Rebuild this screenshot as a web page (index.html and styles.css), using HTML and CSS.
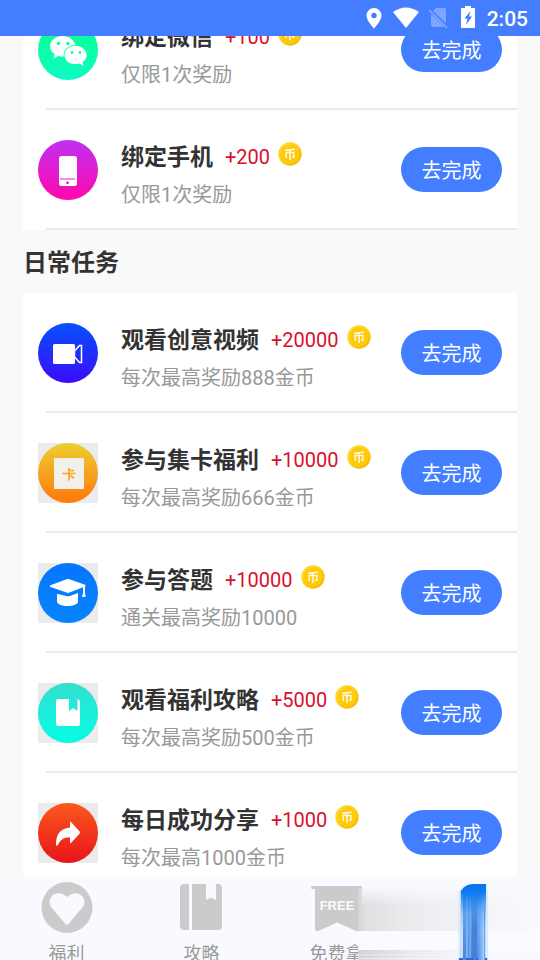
FILE: index.html
```html
<!DOCTYPE html>
<html lang="zh-CN">
<head>
<meta charset="utf-8">
<meta name="viewport" content="width=device-width, initial-scale=1">
<title>任务中心</title>
<link rel="stylesheet" href="styles.css">
</head>
<body>
<svg class="defs" aria-hidden="true">
  <defs>
    <linearGradient id="g-wechat" x1="0" y1="0" x2="0" y2="1"><stop offset="0" stop-color="#0bff8c"/><stop offset="1" stop-color="#0cfcc4"/></linearGradient>
    <linearGradient id="g-phone" x1="0" y1="0" x2="0" y2="1"><stop offset="0" stop-color="#c030f2"/><stop offset="1" stop-color="#ff08ab"/></linearGradient>
    <linearGradient id="g-video" x1="0" y1="0" x2="0" y2="1"><stop offset="0" stop-color="#0650fd"/><stop offset="1" stop-color="#3a0cfb"/></linearGradient>
    <linearGradient id="g-card" x1="0" y1="0" x2="0" y2="1"><stop offset="0" stop-color="#ecce30"/><stop offset="1" stop-color="#ff780c"/></linearGradient>
    <linearGradient id="g-quiz" x1="0" y1="0" x2="0" y2="1"><stop offset="0" stop-color="#0676ff"/><stop offset="1" stop-color="#0684ff"/></linearGradient>
    <linearGradient id="g-guide" x1="0" y1="0" x2="0" y2="1"><stop offset="0" stop-color="#33dfcd"/><stop offset="1" stop-color="#05fde6"/></linearGradient>
    <linearGradient id="g-share" x1="0" y1="0" x2="0" y2="1"><stop offset="0" stop-color="#fb591c"/><stop offset="1" stop-color="#e8141c"/></linearGradient>
    <linearGradient id="g-coin" x1="0" y1="0" x2="1" y2="1"><stop offset="0" stop-color="#ffdc3c"/><stop offset="0.5" stop-color="#fdd00c"/><stop offset="1" stop-color="#f5b000"/></linearGradient>
    <symbol id="coin" viewBox="0 0 24 24">
      <circle cx="12" cy="12" r="11.7" fill="url(#g-coin)"/>
      <circle cx="12" cy="12" r="9.6" fill="#fdcb0b"/>
      <path d="M7 8.2 16.8 7.2M8.2 16V10.500H15.800V15.200H14.200M12 8V18" fill="none" stroke="#fff8dc" stroke-width="1.600"/>
    </symbol>
  </defs>
</svg>

<header class="status">
  <svg width="16" height="22" viewBox="0 0 16 22" aria-hidden="true"><path fill="#fff" fill-rule="evenodd" d="M8 1a7.500 7.500 0 0 0-7.500 7.500C.5 14 8 21.500 8 21.500S15.500 14 15.500 8.500A7.500 7.500 0 0 0 8 1Zm0 4.800a2.700 2.700 0 1 1 0 5.400a2.700 2.700 0 0 1 0-5.400Z"/></svg>
  <svg class="wifi" width="26" height="22" viewBox="0 0 26 22" aria-hidden="true"><path fill="#fff" d="M13 21 0 5Q13-4 26 5Z"/></svg>
  <svg class="sim" width="20" height="22" viewBox="0 0 20 22" aria-hidden="true"><path fill="#7ca6ff" d="M8 1h8q2 0 2 2v17H5q-2 0-2-2V6Z"/><path d="M1 2.500 19.500 20.500" stroke="#427eff" stroke-width="3.500"/><path d="M1 3 19 21" stroke="#88aeff" stroke-width="1.500"/></svg>
  <svg class="battery" width="14" height="22" viewBox="0 0 14 22" aria-hidden="true"><path fill="#fff" d="M4 0h6v2h3q1 0 1 1v18q0 1-1 1H1q-1 0-1-1V3q0-1 1-1h3Z"/><path fill="#427eff" d="M9.500 5 3.500 12.500H6.500L5 19 11 10.500H8Z"/></svg>
  <span class="clock">2:05</span>
</header>

<main class="content">
  <ul class="card card-top">
    <li class="task">
      <svg class="task-icon" viewBox="0 0 60 60" aria-hidden="true"><circle cx="30" cy="30" r="30" fill="url(#g-wechat)"/><path fill="#fff" d="M24.500 16C17.500 16 12 20.600 12 26.300c0 3.400 1.800 6 4.700 7.900L15.500 38.500l4.800-2.600c1.800.5 3.400.7 5.400.6-1-6.500 4.800-11.800 11.600-11.500C36 19.800 31 16 24.500 16Z"/><path fill="#fff" d="M37.500 25.800c-6.200 0-11 4-11 9.100s4.800 9.200 11 9.200c1.500 0 2.800-.2 4-.6l4 2.400-1-3.700c2.500-1.700 4.100-4.300 4.100-7.300 0-5-4.900-9.100-11.100-9.100Z"/><g fill="#0bfdad"><circle cx="20.500" cy="23.500" r="1.700"/><circle cx="30" cy="23.500" r="1.700"/><circle cx="34" cy="32.500" r="1.400"/><circle cx="42" cy="32.500" r="1.400"/></g></svg>
      <div class="task-info">
        <div class="task-head"><h3>绑定微信</h3><span class="reward">+100</span><svg class="coin" aria-hidden="true"><use href="#coin"/></svg></div>
        <p>仅限1次奖励</p>
      </div>
      <button class="go" type="button">去完成</button>
    </li>
    <li class="task">
      <svg class="task-icon" viewBox="0 0 60 60" aria-hidden="true"><circle cx="30" cy="30" r="30" fill="url(#g-phone)"/><rect x="21" y="16" width="18" height="30" rx="2.500" fill="#fff"/><path d="M22 39h15" stroke="#e31cca"/><circle cx="29.500" cy="42.800" r="1.400" fill="#e31cca"/></svg>
      <div class="task-info">
        <div class="task-head"><h3>绑定手机</h3><span class="reward">+200</span><svg class="coin" aria-hidden="true"><use href="#coin"/></svg></div>
        <p>仅限1次奖励</p>
      </div>
      <button class="go" type="button">去完成</button>
    </li>
  </ul>

  <h2 class="section-title">日常任务</h2>

  <ul class="card">
    <li class="task">
      <svg class="task-icon" viewBox="0 0 60 60" aria-hidden="true"><circle cx="30" cy="30" r="30" fill="url(#g-video)"/><rect x="15" y="21" width="22" height="20" rx="1.500" fill="#fff"/><path d="M36.500 28 41.500 22.500h2v17h-2L36.500 34Z" fill="none" stroke="#fff" stroke-width="1.500"/></svg>
      <div class="task-info">
        <div class="task-head"><h3>观看创意视频</h3><span class="reward">+20000</span><svg class="coin" aria-hidden="true"><use href="#coin"/></svg></div>
        <p>每次最高奖励888金币</p>
      </div>
      <button class="go" type="button">去完成</button>
    </li>
    <li class="task">
      <svg class="task-icon framed" viewBox="0 0 60 60" aria-hidden="true"><circle cx="30" cy="30" r="30" fill="url(#g-card)"/><rect x="16" y="15" width="30" height="31" rx="1" fill="#f3efeb"/><path d="M31 25v12.500M31 27.500h5M24.500 30.500H37.500M32.500 32.500l3.500 2.800" fill="none" stroke="#f9a324" stroke-width="1.700"/></svg>
      <div class="task-info">
        <div class="task-head"><h3>参与集卡福利</h3><span class="reward">+10000</span><svg class="coin" aria-hidden="true"><use href="#coin"/></svg></div>
        <p>每次最高奖励666金币</p>
      </div>
      <button class="go" type="button">去完成</button>
    </li>
    <li class="task">
      <svg class="task-icon framed" viewBox="0 0 60 60" aria-hidden="true"><circle cx="30" cy="30" r="30" fill="url(#g-quiz)"/><path fill="#fff" d="M28.500 16.200q1.500-.5 3 0L47 21.700q1.500.8 0 1.700V31q1.500 1.500 0 3h-2.500Q43 32.500 45 31v-6.800L31.500 29.600q-1.500.6-3 0L12.500 24q-1.800-.8 0-1.700ZM19 30.700 28 33q2 .5 4 0l8-3V38.500c0 2.500-4.500 4.500-10.500 4.500S19 41 19 38.500Z"/></svg>
      <div class="task-info">
        <div class="task-head"><h3>参与答题</h3><span class="reward">+10000</span><svg class="coin" aria-hidden="true"><use href="#coin"/></svg></div>
        <p>通关最高奖励10000</p>
      </div>
      <button class="go" type="button">去完成</button>
    </li>
    <li class="task">
      <svg class="task-icon framed" viewBox="0 0 60 60" aria-hidden="true"><circle cx="30" cy="30" r="30" fill="url(#g-guide)"/><path fill="#fff" d="M20 16H31V28l4-3 4.500 3V16q2.500.5 2.500 3V40.500q0 2.500-2.500 2.500h-19Q18 43 18 40.500V18q0-2 2-2Z"/></svg>
      <div class="task-info">
        <div class="task-head"><h3>观看福利攻略</h3><span class="reward">+5000</span><svg class="coin" aria-hidden="true"><use href="#coin"/></svg></div>
        <p>每次最高奖励500金币</p>
      </div>
      <button class="go" type="button">去完成</button>
    </li>
    <li class="task">
      <svg class="task-icon framed" viewBox="0 0 60 60" aria-hidden="true"><circle cx="30" cy="30" r="30" fill="url(#g-share)"/><path fill="#fff" d="M32 19q.3-.7 1 0L41.700 28.500q.6 1 0 2L33 40q-1 .7-1-.5V34.500C26 34 22.500 36.500 19.500 42.500q-1.500.8-1.500-1C18 31.500 22 25.700 32 24.500Z"/></svg>
      <div class="task-info">
        <div class="task-head"><h3>每日成功分享</h3><span class="reward">+1000</span><svg class="coin" aria-hidden="true"><use href="#coin"/></svg></div>
        <p>每次最高1000金币</p>
      </div>
      <button class="go" type="button">去完成</button>
    </li>
  </ul>
</main>

<nav class="tabs">
  <a class="tab" href="#welfare">
    <svg width="52" height="52" viewBox="0 0 52 52" aria-hidden="true"><circle cx="26" cy="26.500" r="25.500" fill="#cbcbcb"/><path fill="#f9faff" d="M26 16C21.500 11 14 11 10.500 15.500 7.500 19.500 8 24 11.500 27.500L24.500 43q1.500 1.300 3 0L40.500 27.500C44 24 44.500 19.500 41.500 15.500 38 11 30.500 11 26 16Z"/></svg>
    <span>福利</span>
  </a>
  <a class="tab" href="#guide">
    <svg width="52" height="52" viewBox="0 0 52 52" aria-hidden="true"><path fill="#cbcbcb" d="M8 3h5v46H8q-4 0-4-4V7q0-4 4-4ZM16 3H30V19l5-2.500 5 2.500V3h2q4 0 4 4V45q0 4-4 4H16Z"/></svg>
    <span>攻略</span>
  </a>
  <a class="tab" href="#free">
    <svg width="52" height="52" viewBox="0 0 52 52" aria-hidden="true"><path fill="#cbcbcb" d="M1.500 5h49q1 0 1 1.500T50.500 8H48V48q0 3-2.500 2L26 41.500 7.500 50Q4 51 4 47.500V8H1.500Q0 8 0 6.500T1.500 5Z"/><text class="free" x="26" y="29" text-anchor="middle">FREE</text></svg>
    <span>免费拿</span>
  </a>
  <a class="tab" href="#mine" aria-label="我的"></a>
  <div class="smear" aria-hidden="true">
    <svg width="100%" height="100%" viewBox="0 0 182 84" preserveAspectRatio="none">
      <defs>
        <linearGradient id="s-grey"><stop offset="0" stop-color="#d4d5d6"/><stop offset="0.040" stop-color="#dddfe0"/><stop offset="0.250" stop-color="#e9ebed"/><stop offset="0.600" stop-color="#f2f3f6"/><stop offset="1" stop-color="#f9faff"/></linearGradient>
        <linearGradient id="s-fade" x1="0" y1="0" x2="0" y2="1"><stop offset="0" stop-color="#f9faff"/><stop offset="1" stop-color="#f9faff" stop-opacity="0"/></linearGradient>
        <linearGradient id="s-low"><stop offset="0" stop-color="#d2d3d7"/><stop offset="0.300" stop-color="#eaebef"/><stop offset="0.700" stop-color="#f9faff"/></linearGradient>
        <linearGradient id="s-blue" x1="0" y1="0" x2="0" y2="1"><stop offset="0" stop-color="#0573f0"/><stop offset="0.120" stop-color="#0f7bf2"/><stop offset="0.400" stop-color="#5aa2f2"/><stop offset="1" stop-color="#4c86dc"/></linearGradient>
        <linearGradient id="s-edge"><stop offset="0" stop-color="#f4f6fb" stop-opacity="0"/><stop offset="1" stop-color="#a9c4ee"/></linearGradient>
        <linearGradient id="s-right"><stop offset="0" stop-color="#5ba6f5" stop-opacity="0.300"/><stop offset="1" stop-color="#e4f1ff"/></linearGradient>
        <linearGradient id="s-down" x1="0" y1="0" x2="0" y2="1"><stop offset="0.100" stop-color="#fff" stop-opacity="0"/><stop offset="0.600" stop-color="#fff"/></linearGradient>
        <mask id="s-mask"><rect x="90" y="8" width="50" height="76" fill="url(#s-down)"/></mask>
      </defs>
      <rect x="6" y="12" width="176" height="72" fill="#f9faff"/>
      <rect x="2" y="12" width="180" height="43" fill="url(#s-grey)"/>
      <rect x="6" y="10" width="176" height="20" fill="url(#s-fade)"/>
      <rect x="2" y="55" width="180" height="20" fill="#fafbff"/>
      <rect x="2" y="74" width="180" height="10" fill="url(#s-low)"/>
      <path d="M2 79h180M2 82.500h180" stroke="#f9faff" stroke-opacity="0.600"/>
      <rect x="99" y="14" width="7" height="70" fill="url(#s-edge)"/>
      <path d="M104 84V15Q108 8 116 8H129V84Z" fill="url(#s-blue)"/>
      <g mask="url(#s-mask)">
        <rect x="120" y="14" width="9" height="70" fill="url(#s-right)"/>
        <rect x="104" y="14" width="2" height="70" fill="#cfe1fa"/>
        <rect x="109" y="14" width="2" height="70" fill="#7db1f0"/>
        <rect x="112" y="14" width="2" height="70" fill="#70a5ec"/>
        <rect x="115" y="14" width="5" height="70" fill="#4780d8"/>
      </g>
      <rect x="127" y="22" width="1" height="62" fill="#5d9bed"/>
      <rect x="129" y="14" width="2" height="70" fill="#dceafd"/>
      <path d="M102 83h4M109 83h7M119 83h2M128 83h2" stroke="#2368e8" stroke-width="2"/>
    </svg>
  </div>
</nav>
</body>
</html>
```
FILE: styles.css
```css
* {
  box-sizing: border-box;
  margin: 0;
  padding: 0;
}

body {
  display: flex;
  flex-direction: column;
  height: 100vh;
  overflow: hidden;
  background: #f9f9f9;
  color: #333;
  font-family: Roboto, "Noto Sans CJK SC", sans-serif;
}

.defs {
  position: absolute;
  width: 0;
  height: 0;
}

.status {
  position: relative;
  z-index: 1;
  flex: none;
  display: flex;
  align-items: center;
  justify-content: flex-end;
  height: 36px;
  padding-right: 12px;
  background: #427eff;
  color: #fff;
}

.wifi {
  margin-left: 11px;
}

.sim {
  margin-left: 9px;
}

.battery {
  margin: 0 12px 2px 13px;
}

.clock {
  padding-top: 2px;
  font-size: 21px;
  font-weight: 500;
  line-height: 34px;
}

.content {
  flex: 1;
  min-height: 0;
  overflow: hidden;
  padding: 0 23px;
}

.card {
  background: #fff;
  list-style: none;
}

/* The list is scrolled part of the way under the status bar. */
.card-top {
  margin-top: -46px;
}

.task {
  display: flex;
  align-items: center;
  height: 120px;
  padding: 0 15px;
  background: linear-gradient(#ebebeb, #ebebeb) 23px 100% / 100% 2px no-repeat;
}

.task-icon {
  flex: none;
  width: 60px;
  height: 60px;
}

.framed {
  background: #ebebeb;
}

.task-info {
  flex: 1;
  min-width: 0;
  margin-left: 23px;
  padding-top: 12px;
  white-space: nowrap;
}

.task-head {
  display: flex;
  align-items: center;
  height: 36px;
}

.task h3 {
  font-size: 23px;
  font-weight: 700;
  line-height: 36px;
}

.reward {
  margin: 0 0 2px 12px;
  color: #d80f2c;
  font-size: 20px;
  line-height: 34px;
}

.coin {
  width: 24px;
  height: 24px;
  margin: 0 0 8px 8px;
}

.task p {
  margin-top: 1px;
  color: #999;
  font-size: 20px;
  line-height: 36px;
}

.go {
  flex: none;
  width: 101px;
  height: 45px;
  margin-bottom: 1px;
  border: 0;
  border-radius: 23px;
  background: #427eff;
  color: #fff;
  font: inherit;
  font-size: 20px;
}

.section-title {
  padding-top: 4px;
  font-size: 24px;
  font-weight: 700;
  line-height: 59px;
}

.tabs {
  position: relative;
  flex: none;
  display: grid;
  grid-template-columns: repeat(4, 1fr);
  height: 84px;
  overflow: hidden;
  background: #f9faff;
}

.tab {
  display: flex;
  flex-direction: column;
  align-items: center;
  padding: 5px 2px 0 0;
  color: #999;
  font-size: 18px;
  line-height: 26px;
  text-decoration: none;
}

.tab span {
  margin-top: 8px;
}

.free {
  fill: #f9faff;
  font: bold 13px "Liberation Sans", sans-serif;
}

/* Ghosted overlay above the last tab. */
.smear {
  position: absolute;
  top: 0;
  right: 0;
  bottom: 0;
  width: 34%;
}
```
